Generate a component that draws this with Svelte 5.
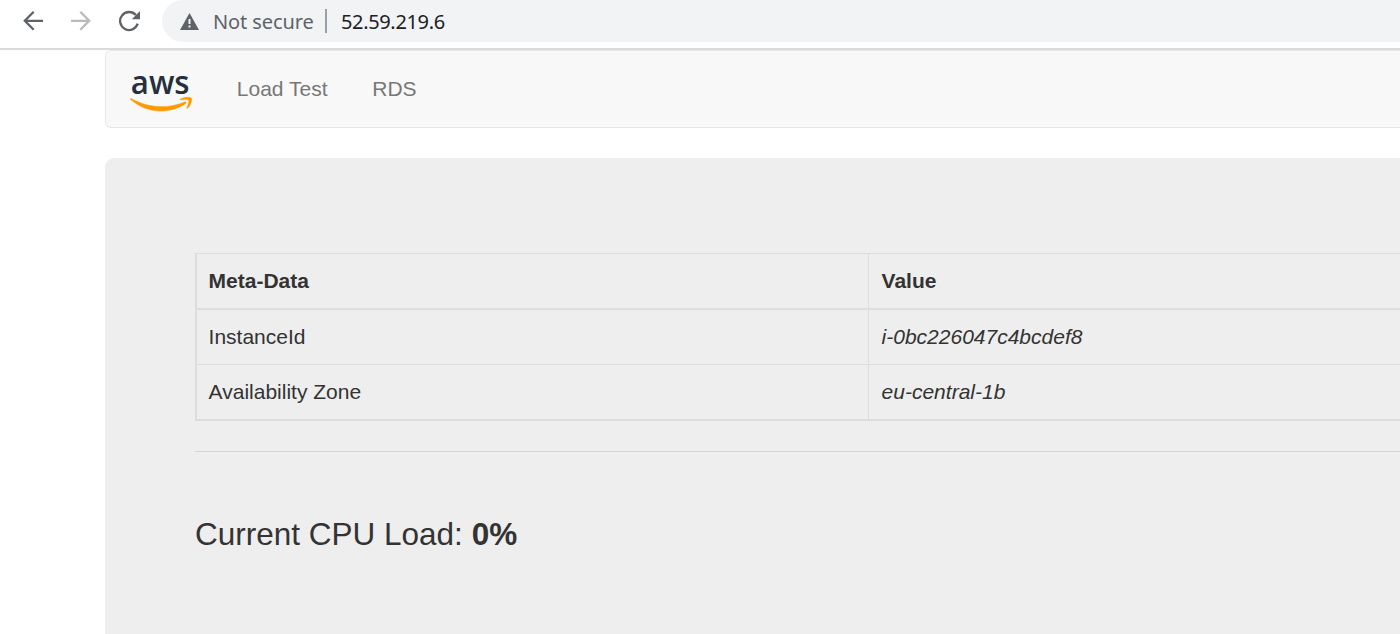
<script>
  const links = ['Load Test', 'RDS'];
  const rows = [
    { name: 'InstanceId', value: 'i-0bc226047c4bcdef8' },
    { name: 'Availability Zone', value: 'eu-central-1b' },
  ];
  const load = 0;
</script>

<div class="window">
  <header class="toolbar">
    <svg class="icon" viewBox="0 0 24 24" aria-label="Back">
      <path d="M22 12.8H4M12.7 3.8 3.8 12.8l8.9 9" />
    </svg>
    <svg class="icon off" viewBox="0 0 24 24" aria-label="Forward">
      <path d="M2 12.8h18M11.3 3.8l8.9 9-8.9 9" />
    </svg>
    <svg class="icon" viewBox="0 0 24 24" aria-label="Reload">
      <path d="M20.7 15.7A9 9 0 1 1 18.9 7.1" />
      <path class="solid" d="M23 3v8.2h-8.2z" />
    </svg>
    <div class="address">
      <svg class="warn" viewBox="0 0 19 17">
        <path d="M9.5 0 19 17H0z" fill="#5f6368" />
        <path d="M8.5 6h2v5h-2zM8.5 12.5h2v2h-2z" fill="#f1f3f4" />
      </svg>
      <span class="status">Not secure</span>
      <span class="divider"></span>
      <span class="url">52.59.219.6</span>
    </div>
  </header>

  <main>
    <nav>
      <svg class="logo" viewBox="0 0 304 185">
        <text x="4" y="95" textLength="288" lengthAdjust="spacingAndGlyphs">aws</text>
        <path d="M273.5 143.7c-32.9 24.3-80.7 37.2-121.8 37.2-57.6 0-109.5-21.3-148.7-56.7-3.1-2.8-.3-6.6 3.4-4.4 42.4 24.6 94.7 39.5 148.8 39.5 36.5 0 76.6-7.6 113.5-23.2 5.5-2.5 10.2 3.6 4.8 7.6z" />
        <path d="M287.2 128.1c-4.2-5.4-27.8-2.6-38.5-1.3-3.2.4-3.7-2.4-.8-4.5 18.8-13.2 49.7-9.4 53.3-5 3.6 4.5-1 35.4-18.6 50.2-2.7 2.3-5.3 1.1-4.1-1.9 4-9.9 12.9-32.2 8.7-37.5z" />
      </svg>
      {#each links as link}
        <span class="link">{link}</span>
      {/each}
    </nav>

    <section>
      <div class="table">
        <div class="row head"><span>Meta-Data</span><span>Value</span></div>
        {#each rows as row}
          <div class="row"><span>{row.name}</span><span><i>{row.value}</i></span></div>
        {/each}
      </div>
      <hr />
      <p class="cpu">Current CPU Load: <b>{load}%</b></p>
    </section>
  </main>
</div>

<style>
  .window {
    width: 100%;
    height: 634px;
    overflow: hidden;
    background: #fff;
    color: #333;
    font: 21px/30px "Liberation Sans", Arial, sans-serif;
  }
  .toolbar {
    box-sizing: border-box;
    height: 50px;
    padding-left: 21px;
    border-bottom: 2px solid #dadada;
    display: flex;
    align-items: flex-start;
    gap: 24px;
  }
  .icon {
    flex: none;
    width: 24px;
    height: 24px;
    margin-top: 8px;
    fill: none;
    stroke: #5f6368;
    stroke-width: 2.3;
  }
  .icon.off { stroke: #bababa; }
  .icon .solid { fill: #5f6368; stroke: none; }
  .address {
    flex: 1;
    box-sizing: border-box;
    height: 42px;
    margin-left: -3px;
    padding-left: 18px;
    border-radius: 21px 0 0 21px;
    background: #f1f3f4;
    display: flex;
    align-items: center;
    font-family: "Noto Sans", sans-serif;
    font-size: 20px;
    line-height: 32px;
  }
  .warn { width: 19px; height: 17px; margin-right: 14px; }
  .status { width: 112px; color: #5f6368; letter-spacing: -0.1px; padding-top: 1px; }
  .divider { width: 2px; height: 24px; background: #9aa0a6; }
  .url { margin-left: 14px; padding-top: 1px; color: #202124; letter-spacing: -0.35px; }
  main { margin-left: 105px; }
  nav {
    box-sizing: border-box;
    height: 78px;
    padding-left: 24px;
    border: 1px solid #e7e7e7;
    border-right: 0;
    border-radius: 6px 0 0 6px;
    background: #f8f8f8;
    display: flex;
    align-items: center;
  }
  .logo {
    width: 62px;
    height: 38px;
    margin-top: 8px;
    overflow: visible;
    fill: #f90;
    stroke: #f90;
    stroke-width: 2;
  }
  .logo text {
    font: 600 163px "Open Sans", sans-serif;
    fill: #252f3e;
    stroke: none;
  }
  .link { margin-left: 44.8px; color: #777; }
  section {
    height: 476px;
    margin-top: 30px;
    padding: 95px 0 0 90px;
    box-sizing: border-box;
    border-radius: 9px 0 0 0;
    background: #eee;
  }
  .table {
    border: solid #ddd;
    border-width: 1px 0 1px 2px;
  }
  .row {
    height: 54px;
    border-bottom: 1px solid #ddd;
    display: grid;
    grid-template-columns: 671px 1fr;
    line-height: 53px;
  }
  .row span { padding-left: 11.6px; }
  .row span + span { padding-left: 12.6px; border-left: 1px solid #ddd; }
  .head { border-bottom-width: 2px; font-weight: bold; }
  hr { height: 1px; margin: 30px 0 0; border: 0; background: #d5d5d5; }
  .cpu { margin: 62px 0 0; font-size: 31.5px; line-height: 40px; }
</style>
